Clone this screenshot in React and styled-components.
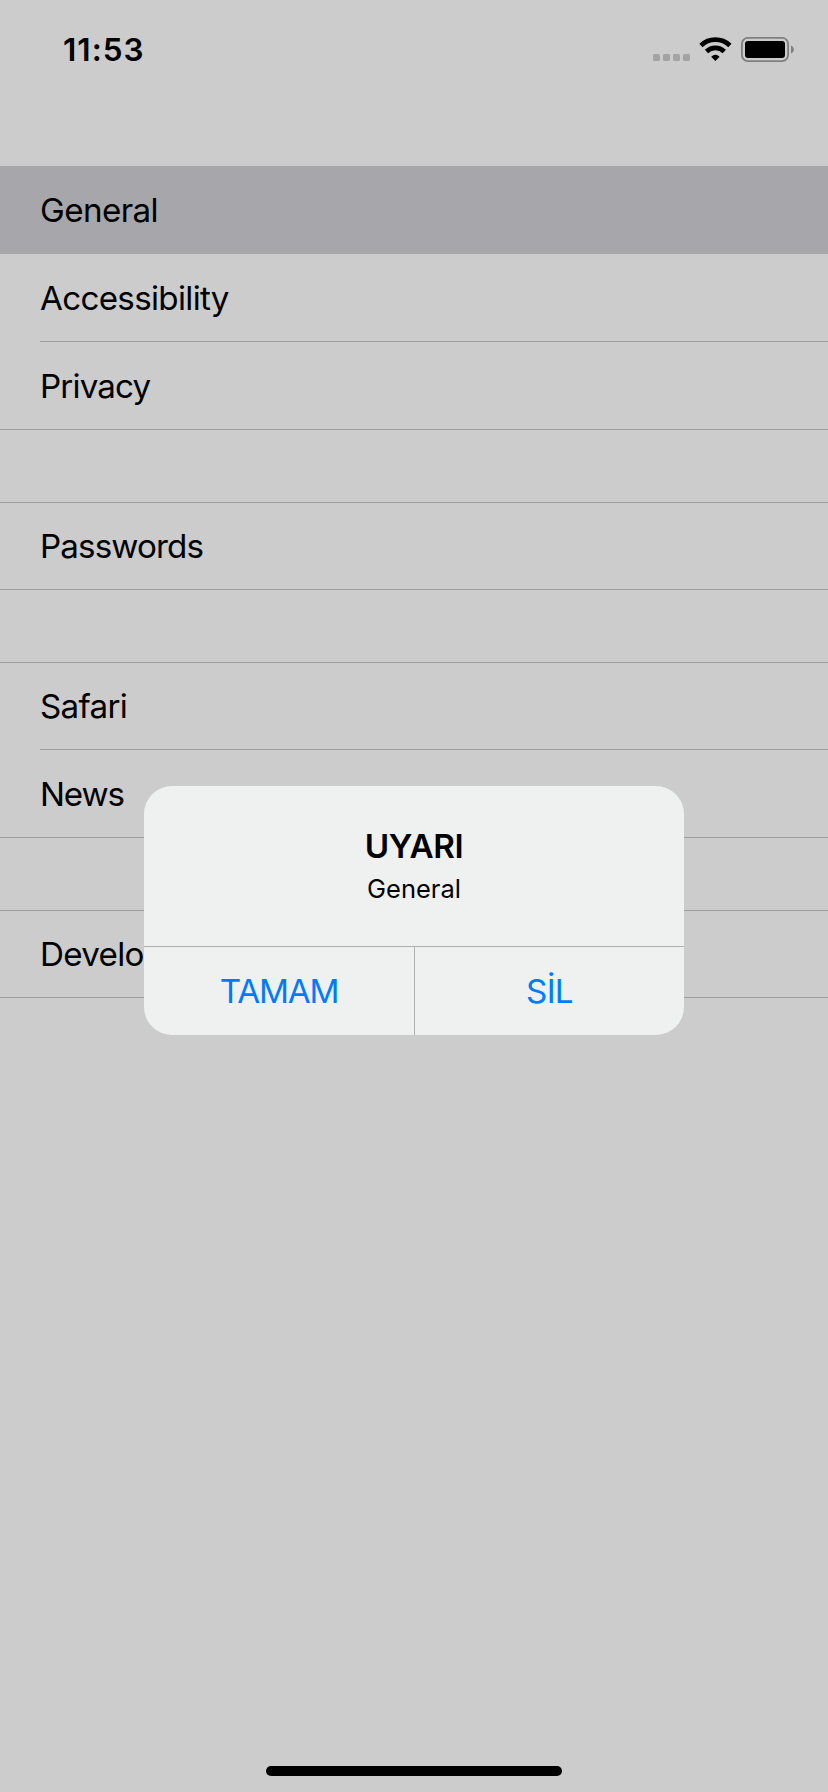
import React from "react";
import styled, { createGlobalStyle } from "styled-components";

const GlobalStyle = createGlobalStyle`
  * { box-sizing: border-box; }
  body {
    margin: 0;
    background: #cccccc;
    color: #000;
    font-family: Inter, "Liberation Sans", sans-serif;
  }
`;

const Screen = styled.div`
  position: relative;
  display: flex;
  flex-direction: column;
  width: 828px;
  height: 1792px;
  overflow: hidden;
  background: #cccccc;
`;

const StatusBar = styled.header`
  display: flex;
  justify-content: space-between;
  height: 166px;
  padding: 30px 34px 0 63px;
`;

const Clock = styled.time`
  height: 40px;
  font-size: 31.5px;
  font-weight: 600;
  line-height: 40px;
  letter-spacing: 1px;
`;

const StatusIcons = styled.svg`
  width: 142px;
  height: 26px;
  margin-top: 7px;
`;

const SettingsList = styled.main`
  display: flex;
  flex: 1;
  flex-direction: column;
  gap: 72px;
`;

const Section = styled.section`
  display: flex;
  flex-direction: column;
  border-top: ${(p) => (p.$first ? "none" : "1px solid #9d9d9f")};
  border-bottom: 1px solid #9d9d9f;
`;

const Row = styled.div`
  height: ${(p) => p.$height}px;
  padding-left: 40px;
  background: ${(p) => (p.$selected ? "#a7a6ab" : "transparent")};
`;

const RowLabel = styled.div`
  height: 100%;
  padding-top: ${(p) => p.$top}px;
  border-bottom: ${(p) => (p.$divided ? "1px solid #9d9d9f" : "none")};
  font-size: 33.2px;
  line-height: 40px;
  letter-spacing: ${(p) => p.$tracking}px;
  white-space: nowrap;
`;

const HomeIndicator = styled.div`
  align-self: center;
  width: 296px;
  height: 10px;
  margin-bottom: 16px;
  border-radius: 5px;
  background: #000;
`;

const Alert = styled.div`
  position: absolute;
  top: 786px;
  left: 144px;
  display: flex;
  flex-direction: column;
  width: 540px;
  height: 249px;
  overflow: hidden;
  border-radius: 28px;
  background: #eff1f1;
`;

const AlertBody = styled.div`
  flex: 1;
  padding-top: 40px;
  text-align: center;
`;

const AlertTitle = styled.h1`
  margin: 0;
  font-size: 33.2px;
  font-weight: 600;
  line-height: 40px;
  letter-spacing: -0.4px;
`;

const AlertMessage = styled.p`
  margin: 7px 0 0;
  font-size: 25.5px;
  line-height: 32px;
  letter-spacing: 0;
`;

const AlertActions = styled.div`
  display: grid;
  grid-template-columns: 270px 270px;
  height: 89px;
  border-top: 1px solid #aeafb0;
`;

const AlertButton = styled.button`
  height: 88px;
  padding: 0;
  border: 0;
  border-left: ${(p) => (p.$divided ? "1px solid #aeafb0" : "none")};
  background: none;
  color: #007aff;
  font-family: inherit;
  font-size: 33.2px;
  line-height: 40px;
  letter-spacing: ${(p) => p.$tracking}px;
`;

const sections = [
  [
    { label: "General", selected: true, tracking: -0.6 },
    { label: "Accessibility", tracking: -0.7 },
    { label: "Privacy", tracking: -0.85 },
  ],
  [{ label: "Passwords", tracking: -0.9 }],
  [
    { label: "Safari", tracking: -0.7 },
    { label: "News", tracking: -1.15 },
  ],
  [{ label: "Developer", tracking: -0.7 }],
];

function StatusGlyphs() {
  return (
    <StatusIcons viewBox="652 37 142 26" aria-hidden="true">
      {[653, 663, 673, 683].map((x) => (
        <rect key={x} x={x} y="54" width="7" height="7" rx="1.6" fill="#a3a3a3" />
      ))}
      <g fill="none" stroke="#000" strokeWidth="4.7">
        <path d="M700.9 45.5a21 21 0 0 1 29 0" />
        <path d="M706.5 51.5a12.8 12.8 0 0 1 17.800 0" />
      </g>
      <path d="M711.2 56.7q4.200-4 8.400 0l-4.200 4.300z" fill="#000" />
      <rect x="741.9" y="37.9" width="46.2" height="23.2" rx="6" fill="none" stroke="#808080" strokeWidth="1.9" />
      <rect x="745" y="41" width="40" height="17" rx="3" />
      <path d="M791 45.500c3.800 1.400 3.800 6.600 0 8z" fill="#808080" />
    </StatusIcons>
  );
}

export default function App() {
  return (
    <>
      <GlobalStyle />
      <Screen>
        <StatusBar>
          <Clock>11:53</Clock>
          <StatusGlyphs />
        </StatusBar>
        <SettingsList>
          {sections.map((rows, s) => (
            <Section key={s} $first={s === 0}>
              {rows.map((row, i) => {
                const last = i === rows.length - 1;
                const lineAbove = s > 0 && i === 0 ? 1 : 0;
                return (
                  <Row
                    key={row.label}
                    $selected={row.selected}
                    $height={88 - lineAbove - (last ? 1 : 0)}
                  >
                    <RowLabel
                      $divided={!last && !row.selected}
                      $top={24 - lineAbove}
                      $tracking={row.tracking}
                    >
                      {row.label}
                    </RowLabel>
                  </Row>
                );
              })}
            </Section>
          ))}
        </SettingsList>
        <HomeIndicator />
        <Alert role="alertdialog">
          <AlertBody>
            <AlertTitle>UYARI</AlertTitle>
            <AlertMessage>General</AlertMessage>
          </AlertBody>
          <AlertActions>
            <AlertButton $tracking={-1.15}>TAMAM</AlertButton>
            <AlertButton $divided $tracking={-0.7}>SİL</AlertButton>
          </AlertActions>
        </Alert>
      </Screen>
    </>
  );
}
